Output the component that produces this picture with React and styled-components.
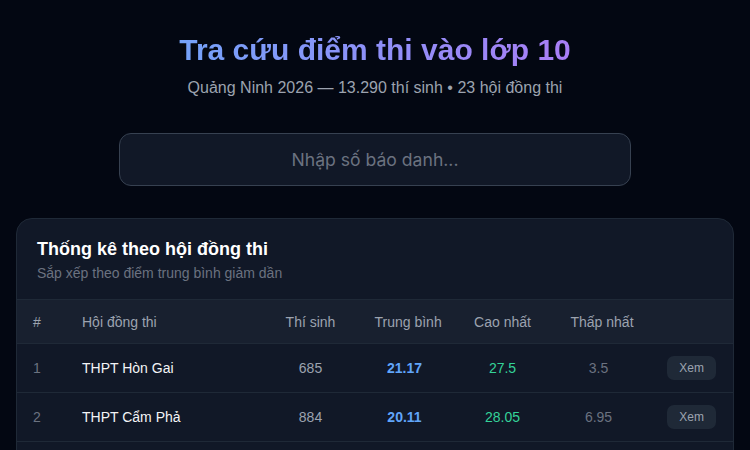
import React from 'react';
import styled, { createGlobalStyle } from 'styled-components';

const GlobalStyle = createGlobalStyle`
  html, body {
    margin: 0;
    padding: 0;
    background: #030712;
  }
  body {
    font-family: "Liberation Sans", Arial, sans-serif;
    color: #f3f4f6;
  }
  * { box-sizing: border-box; }
`;

const Page = styled.div`
  min-height: 100vh;
  padding: 32px 16px 32px;
`;

const Header = styled.header`
  text-align: center;
  margin-bottom: 33px;
`;

const Title = styled.h1`
  margin: 0;
  font-size: 30px;
  line-height: 36px;
  font-weight: 700;
  background: linear-gradient(90deg, #74a2fa, #a97ef6);
  -webkit-background-clip: text;
  background-clip: text;
  color: transparent;
  display: inline-block;
`;

const Subtitle = styled.p`
  margin: 8px 0 0;
  font-size: 16px;
  line-height: 24px;
  color: #9ca3af;
`;

const SearchWrap = styled.div`
  max-width: 512px;
  margin: 0 auto 32px;
`;

const SearchInput = styled.input`
  width: 100%;
  height: 53px;
  padding: 12px 16px;
  border-radius: 12px;
  border: 1px solid #374151;
  background: #111827;
  color: #f3f4f6;
  font-family: Inter, "Liberation Sans", sans-serif;
  font-size: 17.6px;
  text-align: center;
  outline: none;
  &::placeholder {
    color: #6b7280;
  }
`;

const Card = styled.section`
  background: #111827;
  border: 1px solid #1f2937;
  border-radius: 16px;
  overflow: hidden;
`;

const CardHead = styled.div`
  padding: 16px 20px;
  border-bottom: 1px solid #1f2937;
`;

const CardTitle = styled.h2`
  margin: 0;
  font-size: 18px;
  line-height: 28px;
  font-weight: 700;
  color: #ffffff;
`;

const CardSub = styled.p`
  margin: 0;
  font-size: 14px;
  line-height: 20px;
  color: #6b7280;
`;

const Row = styled.div`
  display: grid;
  grid-template-columns: 49px 196.5px 96px 92px 104px 88px 1fr;
  align-items: center;
  background: ${p => (p.$head ? '#18202f' : 'transparent')};
  border-bottom: 1px solid #1f2937;
  font-size: 14px;
  line-height: 20px;
  min-height: ${p => (p.$head ? '44px' : '49px')};
`;

const Cell = styled.div`
  padding: 0 16px;
  text-align: ${p => p.$align || 'left'};
  color: ${p => p.$color || '#9ca3af'};
  font-weight: ${p => (p.$bold ? 700 : 400)};
  white-space: nowrap;
`;

const ActionCell = styled(Cell)`
  padding-right: 17px;
  text-align: right;
`;

const ViewButton = styled.button`
  font-family: inherit;
  font-size: 12px;
  line-height: 16px;
  padding: 4px 12px;
  border: none;
  border-radius: 7px;
  background: #1f2937;
  color: #9ca3af;
  cursor: pointer;
`;

const rows = [
  { name: 'THPT Hòn Gai', count: 685, avg: '21.17', max: '27.5', min: '3.5' },
  { name: 'THPT Cẩm Phả', count: 884, avg: '20.11', max: '28.05', min: '6.95' },
  { name: 'THPT Uông Bí', count: 712, avg: '19.84', max: '27.1', min: '4.2' },
  { name: 'THPT Bãi Cháy', count: 598, avg: '19.32', max: '26.85', min: '5.1' },
];

export default function App() {
  return (
    <>
      <GlobalStyle />
      <Page>
        <Header>
          <Title>Tra cứu điểm thi vào lớp 10</Title>
          <Subtitle>Quảng Ninh 2026 — 13.290 thí sinh • 23 hội đồng thi</Subtitle>
        </Header>

        <SearchWrap>
          <SearchInput placeholder="Nhập số báo danh..." />
        </SearchWrap>

        <Card>
          <CardHead>
            <CardTitle>Thống kê theo hội đồng thi</CardTitle>
            <CardSub>Sắp xếp theo điểm trung bình giảm dần</CardSub>
          </CardHead>

          <Row $head>
            <Cell>#</Cell>
            <Cell>Hội đồng thi</Cell>
            <Cell $align="center">Thí sinh</Cell>
            <Cell $align="center">Trung bình</Cell>
            <Cell $align="center">Cao nhất</Cell>
            <Cell $align="center">Thấp nhất</Cell>
            <ActionCell />
          </Row>

          {rows.map((r, i) => (
            <Row key={r.name}>
              <Cell $color="#6b7280">{i + 1}</Cell>
              <Cell $color="#f3f4f6">{r.name}</Cell>
              <Cell $align="center">{r.count}</Cell>
              <Cell $align="center" $color="#60a5fa" $bold>{r.avg}</Cell>
              <Cell $align="center" $color="#34d399">{r.max}</Cell>
              <Cell $align="center" $color="#6b7280">{r.min}</Cell>
              <ActionCell>
                <ViewButton>Xem</ViewButton>
              </ActionCell>
            </Row>
          ))}
        </Card>
      </Page>
    </>
  );
}
